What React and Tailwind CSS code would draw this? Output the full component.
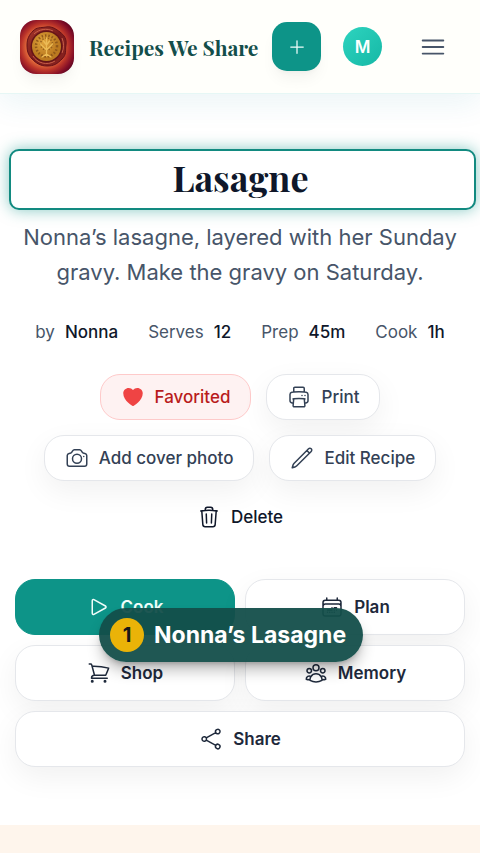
import {
  HiHeart,
  HiOutlineBars3,
  HiOutlineCamera,
  HiOutlinePencil,
  HiOutlinePlay,
  HiOutlinePlus,
  HiOutlinePrinter,
  HiOutlineShare,
  HiOutlineShoppingCart,
  HiOutlineTrash,
  HiOutlineUserGroup,
} from "react-icons/hi2";

function Logo() {
  return (
    <svg viewBox="0 0 54 54" className="size-[54px] shrink-0 rounded-2xl shadow-lg shadow-black/5" aria-hidden="true">
      <defs>
        <radialGradient id="cloth" cx="0.46" cy="0.5" r="0.62">
          <stop offset="0.55" stopColor="#e0683a" />
          <stop offset="0.7" stopColor="#bb3429" />
          <stop offset="0.88" stopColor="#850f27" />
          <stop offset="1" stopColor="#5d0520" />
        </radialGradient>
        <linearGradient id="wax" x1="0" y1="0" x2="1" y2="1">
          <stop offset="0" stopColor="#a93a2c" />
          <stop offset="0.5" stopColor="#7a1a1c" />
          <stop offset="1" stopColor="#8c2520" />
        </linearGradient>
        <radialGradient id="coin" cx="0.4" cy="0.35">
          <stop offset="0" stopColor="#e0a43c" />
          <stop offset="1" stopColor="#bb7a20" />
        </radialGradient>
      </defs>
      <rect width="54" height="54" fill="url(#cloth)" />
      <path d="M26 7c6-1 10 2 14 5s7 7 6 13 1 9-4 14-8 7-15 7-11-3-15-7-5-8-5-14 2-10 6-14 7-3 13-4Z" fill="url(#wax)" stroke="#651018" />
      <path d="M13 36c4 7 14 10 22 5M42 18c2 5 2 10 0 15M14 14c5-5 13-6 19-3" fill="none" stroke="#c9614a" strokeWidth="1" />
      <circle cx="26.500" cy="26.500" r="16" fill="#651417" />
      <circle cx="26.500" cy="26.500" r="14.500" fill="url(#coin)" />
      <circle cx="26.500" cy="26" r="10.500" fill="none" stroke="#8f581a" strokeWidth="2.500" strokeDasharray="1.500 1.900" />
      <circle cx="26.500" cy="24" r="6" fill="none" stroke="#94601e" strokeWidth="1.500" strokeDasharray="1.300 1.600" />
      <path d="M26.500 18v18M26.500 30l-6-6M26.500 30l6-6M26.500 25l-3-4M26.500 25l3-4M22 37l4.500-3 4.500 3" fill="none" stroke="#ecbb55" strokeWidth="1.300" strokeLinecap="round" />
    </svg>
  );
}

function CalendarIcon({ className }) {
  return (
    <svg viewBox="0 0 24 24" fill="none" stroke="currentColor" strokeWidth="1.5" strokeLinecap="round" strokeLinejoin="round" className={className} aria-hidden="true">
      <path d="M6.75 2.994v2.25m10.5-2.25v2.25m-14.252 13.5V7.491a2.25 2.25 0 0 1 2.25-2.25h13.5a2.25 2.25 0 0 1 2.25 2.25v11.251m-18 0a2.25 2.25 0 0 0 2.25 2.25h13.5a2.25 2.25 0 0 0 2.25-2.25m-18 0v-7.5a2.25 2.25 0 0 1 2.25-2.25h13.5a2.25 2.25 0 0 1 2.25 2.25v7.5m-6.75-6h2.25m-9 2.25h4.5m.002-2.25h.005v.006H12v-.006Zm-.001 4.5h.006v.006h-.006v-.005Zm-2.25.001h.005v.006H9.75v-.006Zm-2.25 0h.005v.005h-.006v-.005Zm6.75-2.247h.005v.005h-.005v-.005Zm0 2.247h.006v.006h-.006v-.006Zm2.25-2.248h.006V15H16.5v-.005Z" />
    </svg>
  );
}

const facts = [
  ["by", "Nonna"],
  ["Serves", "12"],
  ["Prep", "45m"],
  ["Cook", "1h"],
];

const softShadow = "shadow-[0_10px_30px_rgba(0,0,0,0.06)]";
const pill = "flex items-center gap-2.5 rounded-[20px] border px-5 font-medium";
const plainPill = `${pill} ${softShadow} h-[46px] border-[#e5e7eb] bg-white text-[#334155]`;
const tile = "flex h-14 items-center justify-center gap-2.5 rounded-[20px] border font-semibold";
const plainTile = `${tile} ${softShadow} border-[#e5e7eb] bg-white text-[#1e293b]`;

export default function App() {
  return (
    <div className="relative flex min-h-screen flex-col overflow-hidden bg-white font-['Inter',sans-serif] text-[17px] leading-6">
      <header className="flex h-[94px] items-center border-b border-[#e6f7f5] bg-[#fffffb] px-5 shadow-[0_8px_30px_rgba(20,130,150,0.09)]">
        <Logo />
        <a href="#home" className="ml-[15px] whitespace-nowrap font-['Playfair_Display','Liberation_Serif',serif] text-[21px] font-bold leading-8 text-[#134e4a]">
          Recipes We Share
        </a>
        <div className="ml-auto flex items-center">
          <button aria-label="Add recipe" className="flex size-[49px] items-center justify-center rounded-[15px] bg-[#0d9488] text-teal-50 shadow-lg shadow-black/5">
            <HiOutlinePlus className="size-5" />
          </button>
          <button aria-label="Account" className="ml-[22px] flex size-[39px] items-center justify-center rounded-full bg-linear-to-br from-[#2dd4bf] to-[#14b8a6] font-semibold text-white">
            M
          </button>
          <button aria-label="Menu" className="ml-9 mr-3 text-[#475569]">
            <HiOutlineBars3 className="size-[30px]" />
          </button>
        </div>
      </header>

      <main className="flex flex-col px-[15px] pb-[58px] pt-[55px]">
        <h1 className="-ml-1.5 -mr-[11px] flex h-[61px] items-center justify-center rounded-[10px] border-2 border-[#128a80] bg-white pb-1.5 pr-1 font-['Playfair_Display','Liberation_Serif',serif] text-[36px] font-bold text-[#0f172a] shadow-[0_0_15px_rgba(13,148,136,0.5)]">
          Lasagne
        </h1>
        <p className="mt-[10px] text-center text-[22px] leading-[35px] text-[#475569]">
          Nonna’s lasagne, layered with her Sunday gravy. Make the gravy on Saturday.
        </p>

        <dl className="mt-[30px] flex flex-wrap justify-center gap-x-[30px]">
          {facts.map(([name, value]) => (
            <div key={name} className="flex gap-2.5">
              <dt className="text-[#475569]">{name}</dt>
              <dd className="font-medium text-[#0f172a]">{value}</dd>
            </div>
          ))}
        </dl>

        <div className="mt-[30px] flex flex-wrap justify-center gap-[15px]">
          <button className={`${pill} h-[46px] border-[#fecaca] bg-[#fef2f2] text-[#b91c1c]`}>
            <HiHeart className="size-6 text-[#ef4444]" />
            Favorited
          </button>
          <button className={plainPill}>
            <HiOutlinePrinter className="size-6" />
            Print
          </button>
          <button className={plainPill}>
            <HiOutlineCamera className="size-6" />
            Add cover photo
          </button>
          <button className={plainPill}>
            <HiOutlinePencil className="size-6" />
            Edit Recipe
          </button>
          <button className={`${pill} h-[42px] border-transparent text-[#0f172a]`}>
            <HiOutlineTrash className="size-6" />
            Delete
          </button>
        </div>

        <div className="mt-[41px] grid grid-cols-2 gap-2.5">
          <button className={`${tile} border-[#0d9488] bg-[#0d9488] text-teal-50`}>
            <HiOutlinePlay className="size-6" />
            Cook
          </button>
          <button className={plainTile}>
            <CalendarIcon className="size-6" />
            Plan
          </button>
          <button className={plainTile}>
            <HiOutlineShoppingCart className="size-6" />
            Shop
          </button>
          <button className={plainTile}>
            <HiOutlineUserGroup className="size-6" />
            Memory
          </button>
          <button className={`${plainTile} col-span-2`}>
            <HiOutlineShare className="size-6" />
            Share
          </button>
        </div>
      </main>

      <section className="grow bg-[#fef5ec]" />

      <div role="status" className="absolute left-[99px] top-[608px] flex h-[54px] items-center gap-2.5 whitespace-nowrap rounded-full bg-[#134e4a]/95 pl-[11px] pr-[17px] text-[23px] font-bold text-white shadow-lg shadow-black/30">
        <span className="flex size-[34px] items-center justify-center rounded-full bg-[#eab308] text-[20px] text-neutral-900">1</span>
        Nonna’s Lasagne
      </div>
    </div>
  );
}
